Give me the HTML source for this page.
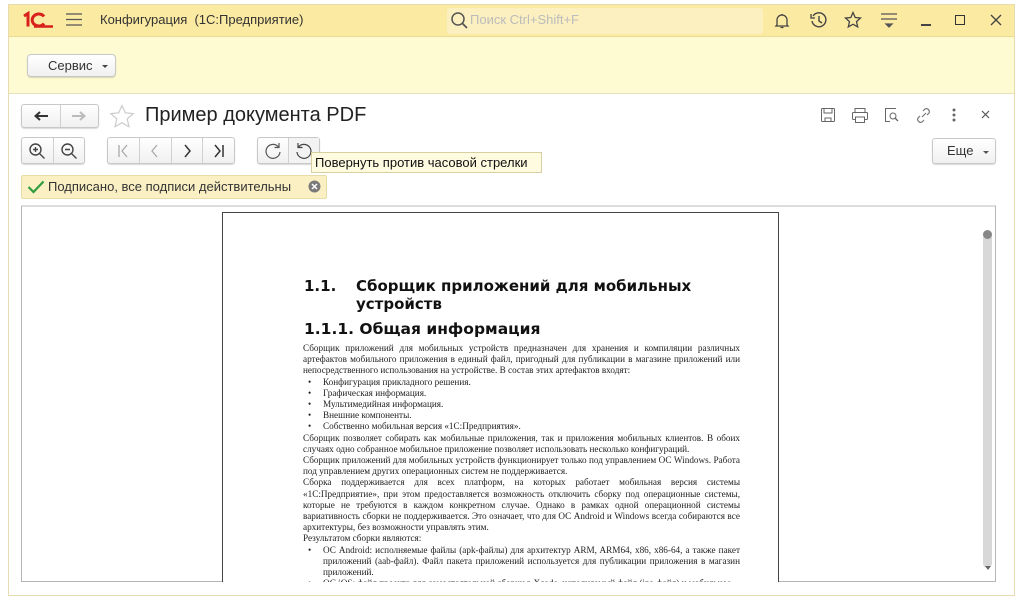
<!DOCTYPE html>
<html><head><meta charset="utf-8"><style>
*{margin:0;padding:0;box-sizing:border-box}
body{width:1024px;height:603px;background:#fff;position:relative;overflow:hidden;font-family:"Liberation Sans","Noto Sans CJK SC",sans-serif;color:#333}
.a{position:absolute}
.win{left:8px;top:4px;width:1007px;height:592px;border:1px solid #e6dcb0;background:#fff}
.top{left:9px;top:5px;width:1005px;height:32px;background:#fbeaa2;border-bottom:1px solid #eadb95}
.sec{left:9px;top:37px;width:1005px;height:57px;background:#fefbd2;border-bottom:1px solid #e5e0c0}
.btn{background:linear-gradient(#fff,#f0f0f0);border:1px solid #c8c8c8;border-radius:3px;box-shadow:0 1px 1px rgba(0,0,0,.15)}
.grp{display:flex}
.grp div{border-right:1px solid #d0d0d0;display:flex;align-items:center;justify-content:center;height:100%}
.grp div:last-child{border-right:none}
svg{display:block}
.doc{font-family:"Liberation Serif",serif;font-size:9.2px;line-height:11.2px;color:#222;text-align:justify}
.doc p{margin:0}
.h{font-family:"DejaVu Sans",sans-serif;font-weight:bold;color:#111}
ul{list-style:none}
li{position:relative;padding-left:20px}
li:before{content:"•";position:absolute;left:5px}
</style></head><body>
<div class="a win"></div>
<div class="a top"></div>
<div class="a sec"></div>
<svg class="a" style="left:20px;top:11px" width="36" height="18"><path d="M4 5l4-2.5v13" stroke="#d8211c" stroke-width="3" fill="none"/><path d="M24 5.5a6.5 6 0 1 0 0 7" stroke="#d8211c" stroke-width="3" fill="none"/><path d="M14 15.5h19" stroke="#d8211c" stroke-width="2.5"/></svg>
<svg class="a" style="left:66px;top:13px" width="16" height="13"><path d="M0 1h16M0 6.5h16M0 12h16" stroke="#555" stroke-width="1.3"/></svg>
<div class="a" style="left:100px;top:12px;font-size:13px;color:#333">Конфигурация&nbsp;&nbsp;(1С:Предприятие)</div>
<div class="a" style="left:447px;top:8px;width:316px;height:26px;background:#fcf0c0;border-radius:3px"></div>
<svg class="a" style="left:450px;top:11px" width="18" height="18"><circle cx="8" cy="8" r="6" stroke="#555" stroke-width="1.5" fill="none"/><path d="M12 12l5 5" stroke="#555" stroke-width="1.8"/></svg>
<div class="a" style="left:470px;top:12px;font-size:13px;color:#bbb">Поиск Ctrl+Shift+F</div>
<svg class="a" style="left:773px;top:11px" width="18" height="18"><path d="M4 14V9a5 5 0 0 1 10 0v5l1 1H3z M9 3v1M7.5 16.5h3" stroke="#444" stroke-width="1.3" fill="none"/></svg>
<svg class="a" style="left:809px;top:10px" width="20" height="20"><path d="M4 6a7 7 0 1 1-1 5" stroke="#444" stroke-width="1.4" fill="none"/><path d="M2 4v4h4" stroke="#444" stroke-width="1.3" fill="none"/><path d="M10 6v5l3 2" stroke="#444" stroke-width="1.4" fill="none"/></svg>
<svg class="a" style="left:844px;top:11px" width="18" height="18"><path d="M9 1.5l2.2 5 5.3.5-4 3.6 1.2 5.3L9 13.2 4.3 15.9l1.2-5.3-4-3.6 5.3-.5z" stroke="#444" stroke-width="1.3" fill="none"/></svg>
<svg class="a" style="left:880px;top:12px" width="18" height="16"><path d="M1 2h16M1 7h16M6 12h6l-3 3z" stroke="#555" stroke-width="1.3" fill="#555"/></svg>
<div class="a" style="left:921px;top:24px;width:10px;height:2px;background:#444"></div>
<div class="a" style="left:955px;top:15px;width:10px;height:10px;border:1.5px solid #333"></div>
<svg class="a" style="left:990px;top:14px" width="12" height="12"><path d="M1 1l10 10M11 1L1 11" stroke="#444" stroke-width="1.3"/></svg>
<div class="a btn" style="left:27px;top:54px;width:89px;height:23px;border-radius:4px"></div>
<div class="a" style="left:48px;top:58px;font-size:13px;color:#333">Сервис</div>
<div class="a" style="left:102px;top:65px;border:3px solid transparent;border-top:3px solid #444;border-bottom:0"></div>
<div class="a btn grp" style="left:21px;top:104px;width:78px;height:24px">
<div style="width:39px"><svg width="16" height="12"><path d="M15 6H3M7 2L2.5 6 7 10" stroke="#333" stroke-width="2" fill="none"/></svg></div>
<div style="width:38px"><svg width="16" height="12"><path d="M1 6h12M9 2l4.5 4L9 10" stroke="#bbb" stroke-width="2" fill="none"/></svg></div></div>
<svg class="a" style="left:109px;top:104px" width="26" height="25"><path d="M13 1.5l3.3 7.3 7.9.8-6 5.3 1.8 7.8L13 18.7l-7 4 1.8-7.8-6-5.3 7.9-.8z" stroke="#ccc" stroke-width="1.2" fill="none"/></svg>
<div class="a" style="left:145px;top:104px;font-size:20px;color:#222">Пример документа PDF</div>
<svg class="a" style="left:820px;top:107px" width="16" height="16"><rect x="1.5" y="1.5" width="13" height="13" rx="1" stroke="#666" fill="none"/><path d="M4 2v4h8V2M5 15v-4h6v4" stroke="#666" fill="none"/></svg>
<svg class="a" style="left:851px;top:107px" width="18" height="17"><rect x="4" y="1.5" width="10" height="4" stroke="#666" fill="none"/><rect x="1.5" y="5.5" width="15" height="7" rx="1" stroke="#666" fill="none"/><rect x="4.5" y="10" width="9" height="5.5" stroke="#666" fill="#fff"/></svg>
<svg class="a" style="left:884px;top:107px" width="16" height="16"><path d="M12 1.5H1.5v13H6" stroke="#666" fill="none"/><circle cx="9" cy="9" r="3" stroke="#666" fill="none"/><path d="M11 11l3 3" stroke="#666" stroke-width="1.3"/></svg>
<svg class="a" style="left:915px;top:107px" width="17" height="17"><path d="M7 10l4-4M8 4l2-2a3 3 0 0 1 4 4l-2 2M9 13l-2 2a3 3 0 0 1-4-4l2-2" stroke="#777" stroke-width="1.2" fill="none"/></svg>
<svg class="a" style="left:951px;top:108px" width="6" height="14"><circle cx="3" cy="2" r="1.5" fill="#666"/><circle cx="3" cy="7" r="1.5" fill="#666"/><circle cx="3" cy="12" r="1.5" fill="#666"/></svg>
<svg class="a" style="left:981px;top:110px" width="9" height="9"><path d="M1 1l7 7M8 1L1 8" stroke="#555" stroke-width="1.2"/></svg>
<div class="a btn grp" style="left:21px;top:137px;width:64px;height:27px">
<div style="width:32px"><svg width="18" height="18"><circle cx="7.5" cy="7.5" r="5.5" stroke="#444" stroke-width="1.4" fill="none"/><path d="M11.5 11.5l5 5M5 7.5h5M7.5 5v5" stroke="#444" stroke-width="1.4"/></svg></div>
<div style="width:31px"><svg width="18" height="18"><circle cx="7.5" cy="7.5" r="5.5" stroke="#444" stroke-width="1.4" fill="none"/><path d="M11.5 11.5l5 5M5 7.5h5" stroke="#444" stroke-width="1.4"/></svg></div></div>
<div class="a btn grp" style="left:107px;top:137px;width:128px;height:27px">
<div style="width:32px"><svg width="12" height="14"><path d="M2 1v12M10 1L5 7l5 6" stroke="#aaa" stroke-width="1.3" fill="none"/></svg></div>
<div style="width:32px"><svg width="10" height="14"><path d="M7 1L2 7l5 6" stroke="#aaa" stroke-width="1.3" fill="none"/></svg></div>
<div style="width:32px"><svg width="10" height="14"><path d="M3 1l5 6-5 6" stroke="#333" stroke-width="1.5" fill="none"/></svg></div>
<div style="width:31px"><svg width="12" height="14"><path d="M2 1l5 6-5 6M10 1v12" stroke="#333" stroke-width="1.5" fill="none"/></svg></div></div>
<div class="a btn grp" style="left:257px;top:137px;width:63px;height:27px">
<div style="width:32px"><svg width="18" height="18"><path d="M14.5 5A7 7 0 1 0 16 10" stroke="#555" stroke-width="1.2" fill="none"/><path d="M15 1v4.5h-4.5" stroke="#555" stroke-width="1.2" fill="none"/></svg></div>
<div style="width:30px;background:#f3f3f3"><svg width="18" height="18"><path d="M3.5 5A7 7 0 1 1 2 10" stroke="#444" stroke-width="1.2" fill="none"/><path d="M3 1v4.5h4.5" stroke="#444" stroke-width="1.2" fill="none"/></svg></div></div>
<div class="a" style="left:311px;top:152px;width:231px;height:21px;background:#fffbe0;border:1px solid #d8cfa0;font-size:13px;color:#111;padding:2px 0 0 3px;white-space:nowrap">Повернуть против часовой стрелки</div>
<div class="a btn" style="left:932px;top:138px;width:64px;height:26px"></div>
<div class="a" style="left:947px;top:143px;font-size:13px;color:#333">Еще</div>
<div class="a" style="left:983px;top:151px;border:3px solid transparent;border-top:3px solid #555;border-bottom:0"></div>
<div class="a" style="left:21px;top:175px;width:306px;height:24px;background:#fbf0c4;border:1px solid #e7dca8;border-radius:2px"></div>
<svg class="a" style="left:27px;top:180px" width="18" height="14"><path d="M1.5 7l5 5L16.5 1.5" stroke="#2e9e3e" stroke-width="2.2" fill="none"/></svg>
<div class="a" style="left:48px;top:179px;font-size:13px;color:#333">Подписано, все подписи действительны</div>
<svg class="a" style="left:308px;top:180px" width="13" height="13"><circle cx="6.5" cy="6.5" r="6" fill="#7a7a7a"/><path d="M4 4l5 5M9 4L4 9" stroke="#fff" stroke-width="1.5"/></svg>
<div class="a" style="left:21px;top:205px;width:975px;height:377px;border:1px solid #b5b5b5;border-top:2px solid #ddd;background:#fff"></div>
<div class="a" style="left:983px;top:231px;width:9px;height:337px;background:#d8d8d8;border-radius:5px"></div>
<div class="a" style="left:983px;top:230px;width:9px;height:9px;background:#888;border-radius:50%"></div>
<div class="a" style="left:985px;top:566px;border:3px solid transparent;border-top:4px solid #666;border-bottom:0"></div>
<div class="a" style="left:222px;top:212px;width:557px;height:370px;border:1px solid #444;border-bottom:none;background:#fff;overflow:hidden">
<div class="a h" style="left:81px;top:64px;font-size:15px;line-height:18px">1.1.</div>
<div class="a h" style="left:133px;top:64px;font-size:15px;line-height:18px">Сборщик приложений для мобильных<br>устройств</div>
<div class="a h" style="left:81px;top:107px;font-size:15.5px">1.1.1. Общая информация</div>
<div class="a doc" style="left:80px;top:130px;width:437px">
<p>Сборщик приложений для мобильных устройств предназначен для хранения и компиляции различных артефактов мобильного приложения в единый файл, пригодный для публикации в магазине приложений или непосредственного использования на устройстве. В состав этих артефактов входят:</p>
<ul><li>Конфигурация прикладного решения.</li><li>Графическая информация.</li><li>Мультимедийная информация.</li><li>Внешние компоненты.</li><li>Собственно мобильная версия «1С:Предприятия».</li></ul>
<p>Сборщик позволяет собирать как мобильные приложения, так и приложения мобильных клиентов. В обоих случаях одно собранное мобильное приложение позволяет использовать несколько конфигураций.</p>
<p>Сборщик приложений для мобильных устройств функционирует только под управлением ОС Windows. Работа под управлением других операционных систем не поддерживается.</p>
<p>Сборка поддерживается для всех платформ, на которых работает мобильная версия системы «1С:Предприятие», при этом предоставляется возможность отключить сборку под операционные системы, которые не требуются в каждом конкретном случае. Однако в рамках одной операционной системы вариативность сборки не поддерживается. Это означает, что для ОС Android и Windows всегда собираются все архитектуры, без возможности управлять этим.</p>
<p>Результатом сборки являются:</p>
<ul><li>ОС Android: исполняемые файлы (apk-файлы) для архитектур ARM, ARM64, x86, x86-64, а также пакет приложений (aab-файл). Файл пакета приложений используется для публикации приложения в магазин приложений.</li><li>ОС iOS: файл проекта для самостоятельной сборки в Xcode, исполняемый файл (ipa-файл) и мобильное</li></ul>
</div></div>
</body></html>
